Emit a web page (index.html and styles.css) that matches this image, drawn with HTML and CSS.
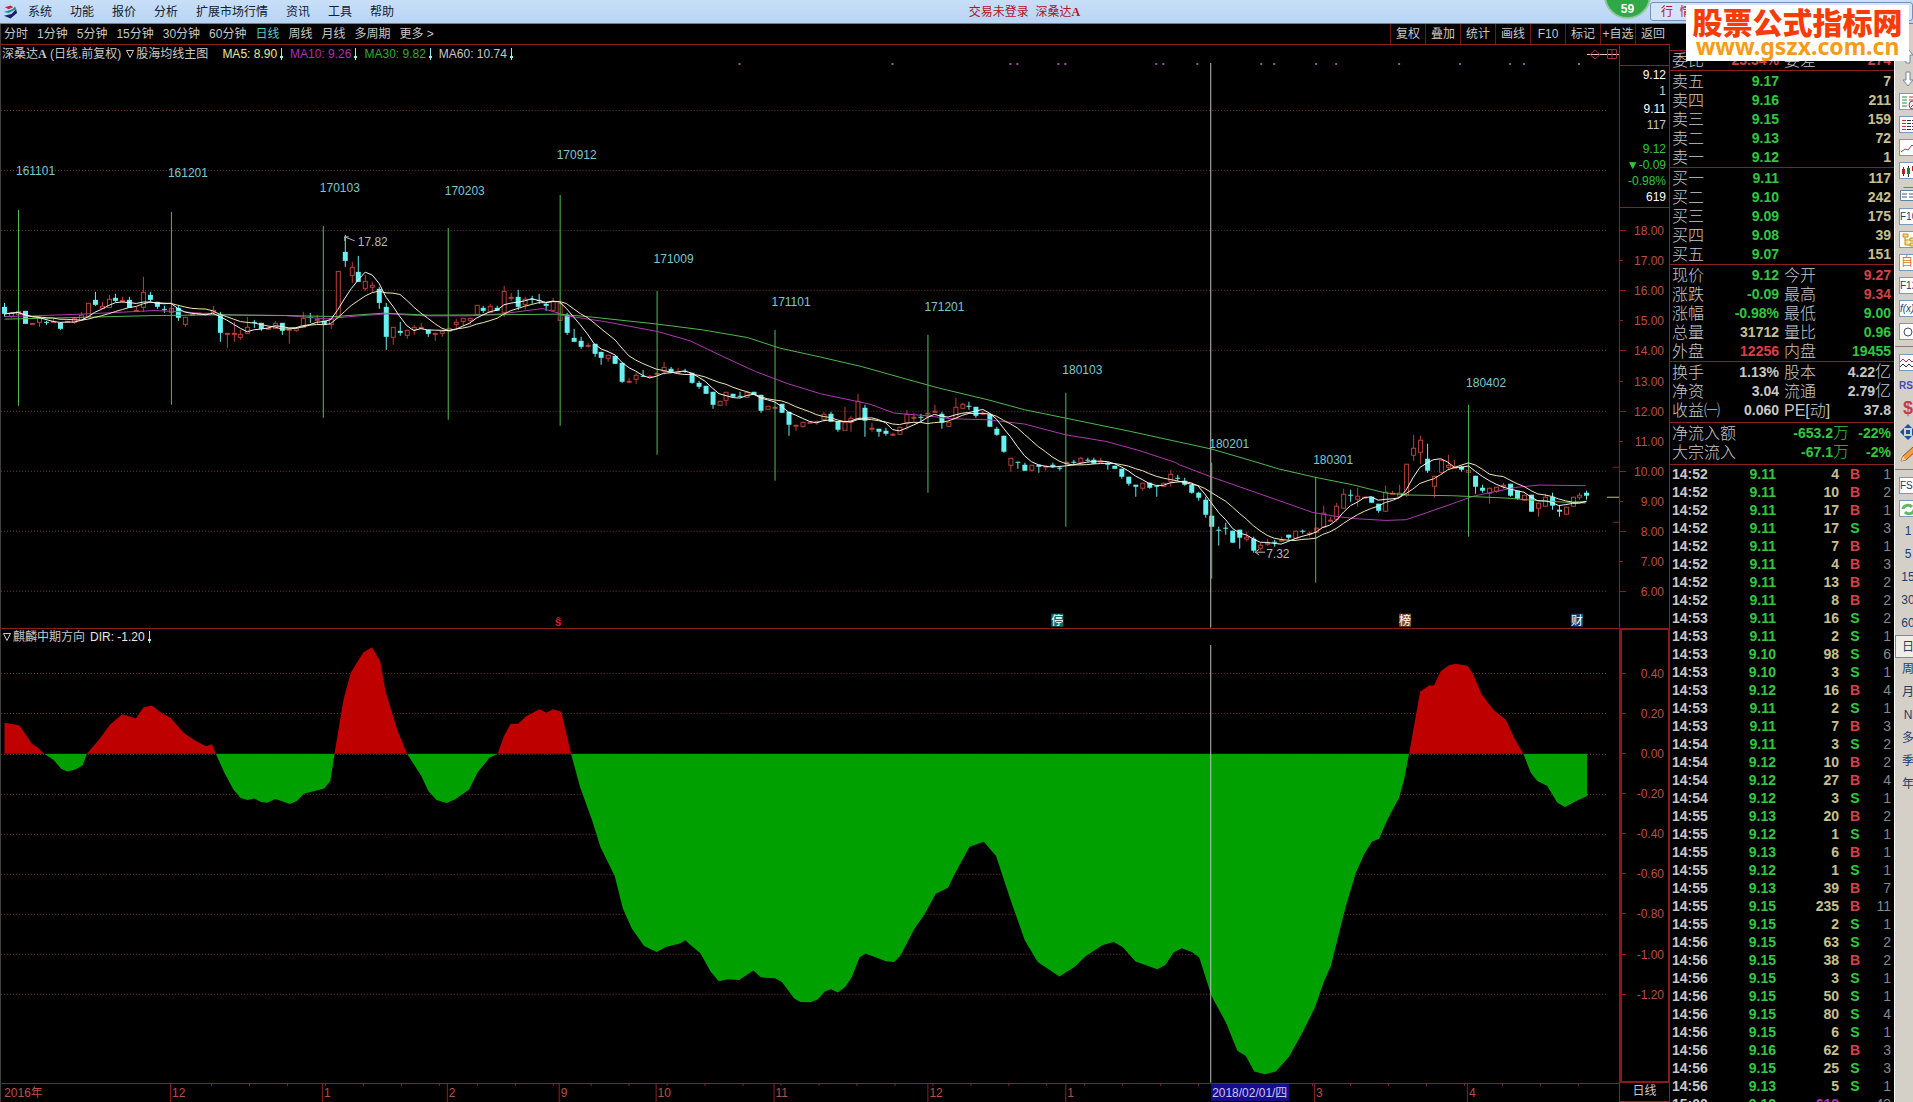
FILE: index.html
```html
<!DOCTYPE html>
<html lang="zh-CN">
<head>
<meta charset="utf-8">
<title>深桑达A 日线</title>
<link rel="stylesheet" href="styles.css">
</head>
<body>
<header class="menubar">
  <svg class="logo" viewBox="0 0 16 16" aria-hidden="true"><path d="M2 3 L8 1 L11 3 L6 5 Z" fill="#c8283c"/><path d="M1 8 L10 5 L13 2 L14 5 L6 9 Z" fill="#1c8c8c"/><path d="M1 12 L9 10 L14 5 L15 9 L8 15 Z" fill="#16206c"/></svg>
  <nav class="menu">
    <button>系统</button><button>功能</button><button>报价</button><button>分析</button><button>扩展市场行情</button><button>资讯</button><button>工具</button><button>帮助</button>
  </nav>
  <p class="app-title">交易未登录&nbsp; 深桑达<b>A</b></p>
  <button class="market-tab">行&nbsp; 情</button>
  <span class="score">59</span>
</header>

<main class="workspace">
  <div class="charts">
    <div class="periods">
      <nav class="period-list">
        <button>分时</button><button>1分钟</button><button>5分钟</button><button>15分钟</button><button>30分钟</button><button>60分钟</button><button class="active">日线</button><button>周线</button><button>月线</button><button>多周期</button><button>更多 &gt;</button>
      </nav>
      <div class="actions">
        <button>复权</button><button>叠加</button><button>统计</button><button>画线</button><button>F10</button><button>标记</button><button>+自选</button><button>返回</button>
      </div>
    </div>

    <section class="pane">
      <div class="legend">
        <span>深桑达<b>A</b> (日线.前复权)</span>
        <button class="fold" aria-label="折叠"><svg viewBox="0 0 8 8"><path d="M0.500 0.500H7.500L4 7.500Z" fill="none" stroke="#c8c8c8"/></svg></button>
        <span class="name">股海均线主图</span>
        <span class="ma ma5">MA5: 8.90</span>
        <span class="ma ma10">MA10: 9.26</span>
        <span class="ma ma30">MA30: 9.82</span>
        <span class="ma ma60">MA60: 10.74</span>
        <svg class="corner" viewBox="0 0 32 14" aria-hidden="true"><path d="M0 7.5H32" stroke="#e0c8c8"/><path d="M8 3l5 4.500l-5 4.500l-5-4.500ZM20.500 2.500h9v9h-9ZM25 2v10" fill="none" stroke="#a03030"/></svg>
      </div>
      <svg class="plot" id="price" viewBox="0 63 1619 565" role="img" aria-label="日K线"></svg>
    </section>
    <aside class="scale">
      <div class="quote">
        <span class="w">9.12</span><span>1</span><span class="w gap">9.11</span><span>117</span>
        <span class="g gap2">9.12</span><span class="g">▼-0.09</span><span class="g">-0.98%</span><span class="w">619</span>
      </div>
      <svg class="ticks" id="price-scale" viewBox="1620 208 49 420"></svg>
    </aside>

    <section class="pane lower">
      <div class="legend">
        <button class="fold" aria-label="折叠"><svg viewBox="0 0 8 8"><path d="M0.500 0.500H7.500L4 7.500Z" fill="none" stroke="#c8c8c8"/></svg></button>
        <span class="name">麒麟中期方向</span>
        <span class="ma dir">DIR: -1.20</span>
      </div>
      <svg class="plot" id="dir" viewBox="0 645 1619 438" role="img" aria-label="DIR"></svg>
    </section>
    <aside class="scale boxed"><svg class="ticks" id="dir-scale" viewBox="1622 631 46 450"></svg></aside>

    <svg class="plot timeline" id="time" viewBox="0 1083 1619 18"></svg>
    <div class="unit">日线</div>
  </div>

  <aside class="book">
    <table class="rows first"><tr><th>委比</th><td class="r">23.34%</td><th>委差</th><td class="r">274</td></tr></table>
    <table class="rows levels">
      <tr><th>卖五</th><td class="g">9.17</td><td class="y">7</td></tr>
      <tr><th>卖四</th><td class="g">9.16</td><td class="y">211</td></tr>
      <tr><th>卖三</th><td class="g">9.15</td><td class="y">159</td></tr>
      <tr><th>卖二</th><td class="g">9.13</td><td class="y">72</td></tr>
      <tr><th>卖一</th><td class="g">9.12</td><td class="y">1</td></tr>
    </table>
    <table class="rows levels">
      <tr><th>买一</th><td class="g">9.11</td><td class="y">117</td></tr>
      <tr><th>买二</th><td class="g">9.10</td><td class="y">242</td></tr>
      <tr><th>买三</th><td class="g">9.09</td><td class="y">175</td></tr>
      <tr><th>买四</th><td class="g">9.08</td><td class="y">39</td></tr>
      <tr><th>买五</th><td class="g">9.07</td><td class="y">151</td></tr>
    </table>
    <table class="rows">
      <tr><th>现价</th><td class="g">9.12</td><th>今开</th><td class="r">9.27</td></tr>
      <tr><th>涨跌</th><td class="g">-0.09</td><th>最高</th><td class="r">9.34</td></tr>
      <tr><th>涨幅</th><td class="g">-0.98%</td><th>最低</th><td class="g">9.00</td></tr>
      <tr><th>总量</th><td class="y">31712</td><th>量比</th><td class="g">0.96</td></tr>
      <tr><th>外盘</th><td class="r">12256</td><th>内盘</th><td class="g">19455</td></tr>
    </table>
    <table class="rows roomy">
      <tr><th>换手</th><td>1.13%</td><th>股本</th><td>4.22<i>亿</i></td></tr>
      <tr><th>净资</th><td>3.04</td><th>流通</th><td>2.79<i>亿</i></td></tr>
      <tr><th>收益㈠</th><td>0.060</td><th>PE[动]</th><td>37.8</td></tr>
    </table>
    <table class="rows flow roomy">
      <tr><th>净流入额</th><td class="g">-653.2<i>万</i></td><td class="g pct">-22%</td></tr>
      <tr><th>大宗流入</th><td class="g">-67.1<i>万</i></td><td class="g pct">-2%</td></tr>
    </table>
    <table class="trades"><tbody id="trades"></tbody></table>
  </aside>

  <nav class="strip" id="strip">
    <button aria-label="上"><svg viewBox="0 0 18 16"><path d="M9 1L14 7H11V15H7V7H4Z" fill="#fff" stroke="#7088a0"/></svg></button>
    <button aria-label="下"><svg viewBox="0 0 18 16"><path d="M9 15L14 9H11V1H7V9H4Z" fill="#fff" stroke="#7088a0"/></svg></button>
    <button class="tile" aria-label="报价"><svg viewBox="0 0 18 16"><path d="M2 3h5M2 6h5M2 9h5M2 12h5" stroke="#2a8a3a"/><path d="M9 3h6M9 6h6" stroke="#c03040"/><circle cx="13" cy="11" r="4" fill="#eee" stroke="#555"/><path d="M11 13l4-4" stroke="#a33"/></svg></button>
    <button class="tile" aria-label="列表"><svg viewBox="0 0 18 16"><path d="M2 3.500h16M2 6.500h16M2 9.500h16M2 12.500h16" stroke="#303048" stroke-dasharray="4 1"/><path d="M2 3.500h4M2 6.500h4M2 9.500h4M2 12.500h4" stroke="#c03040"/></svg></button>
    <button class="tile" aria-label="分时"><svg viewBox="0 0 18 16"><path d="M1 12L5 9L8 10L12 5L14 7L18 3" fill="none" stroke="#b03048"/></svg></button>
    <button class="tile" aria-label="K线"><svg viewBox="0 0 18 16"><path d="M3.500 4v9M8.500 3v11M13.500 1v9" stroke="#333"/><path d="M2 6h3v5H2ZM12 3h3v5h-3Z" fill="#b02020"/><path d="M7 5h3v6H7Z" fill="#208030"/></svg></button>
    <button aria-label="窗口"><svg viewBox="0 0 18 16"><path d="M4.500 1.500h14v10" fill="none" stroke="#6080a0"/><path d="M1.500 4.500h14v10h-14Z" fill="#fff" stroke="#6080a0"/><path d="M3 8h5M10 8h4M3 11h5M10 11h4" stroke="#405878"/></svg></button>
    <button class="tile small">F10</button>
    <button class="tile" aria-label="树"><svg viewBox="0 0 18 16"><path d="M3 2h5v3H3ZM10 6h5v3h-5ZM10 11h5v3h-5ZM5 5v8h5M5 8h5" fill="#f8e080" stroke="#c09020"/></svg></button>
    <button class="tile orange">自</button>
    <button class="tile small">F12</button>
    <button class="tile small ital">f(x)</button>
    <button class="tile" aria-label="圆"><svg viewBox="0 0 18 16"><circle cx="8" cy="8" r="4" fill="none" stroke="#405060"/></svg></button>
    <hr>
    <button class="tile" aria-label="波"><svg viewBox="0 0 18 16"><path d="M0 7l3-3 3 3 3-3 3 3 3-3 3 3" fill="none" stroke="#b03050"/><path d="M0 12l3-3 3 3 3-3 3 3 3-3 3 3" fill="none" stroke="#303040"/></svg></button>
    <button class="rsi">RSI</button>
    <button class="dollar">$</button>
    <button aria-label="移动"><svg viewBox="0 0 18 16"><path d="M9 0l4 4H5ZM9 16l4-4H5ZM1 8l4-4v8ZM17 8l-4-4v8Z" fill="#1850a8"/><rect x="7" y="6" width="4" height="4" fill="#1850a8"/></svg></button>
    <button aria-label="画笔"><svg viewBox="0 0 18 16"><path d="M2 14L4 9L14 0L18 3L7 13Z" fill="#f0a040" stroke="#905020"/><path d="M2 14l2-5 3 4Z" fill="#e8d0b0"/></svg></button>
    <hr>
    <button class="tile small">FS</button>
    <button class="tile" aria-label="刷新"><svg viewBox="0 0 18 16"><path d="M3 8a5 4 0 0 1 9-2M14 8a5 4 0 0 1-9 3" fill="none" stroke="#60b860" stroke-width="3"/></svg></button>
    <button>1</button><button>5</button><button>15</button><button>30</button><button>60</button><button class="on">日</button><button>周</button><button>月</button><button>N</button><button>多</button><button>季</button><button>年</button>
  </nav>
</main>

<div class="watermark"><strong>股票公式指标网</strong><span>www.gszx.com.cn</span></div>
<script src="chart.js"></script>
</body>
</html>
```
FILE: styles.css
```css
* { box-sizing: border-box; }
body {
  margin: 0;
  height: 100vh;
  overflow: hidden;
  display: flex;
  flex-direction: column;
  background: #000;
  color: #c8c8c8;
  font: 12px/16px "Liberation Sans", "Noto Sans CJK SC", sans-serif;
}
button {
  margin: 0;
  padding: 0;
  border: 0;
  background: none;
  color: inherit;
  font: inherit;
  white-space: nowrap;
}

/* Menu bar */
.menubar {
  position: relative;
  flex: none;
  display: flex;
  align-items: center;
  height: 24px;
  padding-left: 3px;
  background: linear-gradient(#c8dff8, #b8d4f4);
  border-bottom: 1px solid #708090;
  color: #142030;
}
.logo { width: 15px; height: 16px; }
.menu { display: flex; gap: 18px; margin-left: 10px; }
.app-title {
  position: absolute;
  left: 0;
  right: 0;
  margin: 0;
  padding-left: 136px;
  text-align: center;
  color: #b01428;
  pointer-events: none;
}
.app-title b, .legend b { font-family: "Liberation Serif", serif; }
.market-tab {
  position: absolute;
  right: 0;
  top: 2px;
  width: 263px;
  height: 19px;
  padding-left: 10px;
  border: 1px solid #7890b8;
  border-radius: 3px;
  background: #d4e4f8;
  color: #b01428;
  text-align: left;
}
.score {
  position: absolute;
  top: -28px;
  right: 262px;
  width: 47px;
  height: 47px;
  padding-top: 27px;
  border: 2px solid #8cc89c;
  border-radius: 50%;
  background: #30a848;
  color: #fff;
  font-weight: bold;
  text-align: center;
}

/* Workspace columns */
.workspace {
  flex: 1;
  min-height: 0;
  display: grid;
  grid-template-columns: 1fr 224px 19px;
}
.charts {
  display: grid;
  grid-template-columns: 1fr 51px;
  align-content: start;
  border-left: 1px solid #404040;
}
.periods {
  grid-column: 1 / -1;
  display: flex;
  justify-content: space-between;
  height: 21px;
  line-height: 20px;
  border-bottom: 1px solid #8c2020;
}
.period-list { display: flex; gap: 9px; padding-left: 3px; }
.period-list .active { color: #50c8c8; }
.actions { display: flex; }
.actions button { width: 35px; border-left: 1px solid #701818; }

/* Chart panes */
.pane { min-width: 0; }
.legend {
  display: flex;
  align-items: center;
  height: 18px;
  line-height: 18px;
  padding-left: 1px;
  white-space: nowrap;
}
.lower { border-top: 1px solid #8c2020; }
.lower .legend { height: 16px; padding-left: 0; }
.fold { display: flex; margin: 0 2px; }
.fold svg { width: 8px; height: 8px; }
.legend > span + .fold { margin-left: 5px; }
.name { margin-right: 5px; }
.pane:not(.lower) .name { margin-right: 14px; }
.ma { margin-right: 6px; }
.ma::after {
  content: "";
  display: inline-block;
  width: 5px;
  height: 12px;
  margin-left: 2px;
  vertical-align: -2px;
  background:
    linear-gradient(#90f0f0, #90f0f0) 2px 0 / 1px 12px no-repeat,
    linear-gradient(#90f0f0, #90f0f0) 1px 8px / 3px 2px no-repeat;
}
.ma5 { color: #e8e8a0; }
.ma10 { color: #b030b0; }
.ma30 { color: #38a838; }
.dir { color: #e8e8e8; }
.corner { width: 32px; height: 14px; margin-left: auto; }
.plot { display: block; width: 100%; }
.scale {
  display: flex;
  flex-direction: column;
  border-left: 1px solid #8c2020;
  border-right: 1px solid #8c2020;
}
.boxed { border: 2px solid #8c1818; border-left-width: 3px; }
.ticks { display: block; width: 100%; }
.quote {
  display: flex;
  flex-direction: column;
  height: 143px;
  margin-top: 20px;
  padding: 1px 3px 0 0;
  border-top: 1px solid #8c2020;
  border-bottom: 1px solid #8c2020;
  text-align: right;
}
.quote .gap { margin-top: 2px; }
.quote .gap2 { margin-top: 8px; }
.w { color: #fff; }
.g { color: #30c840; }
.r { color: #d84048; }
.y { color: #c8c090; }
.timeline { border-top: 1px solid #8c2020; border-bottom: 1px solid #8c2020; }
.unit {
  height: 19px;
  line-height: 17px;
  border: 1px solid #8c2020;
  border-top: 0;
  text-align: center;
}

/* Vector drawing */
svg text { font: 12px "Liberation Sans", "Noto Sans CJK SC", sans-serif; }
.grid { stroke: #783830; stroke-dasharray: 1 2; }
.axis-label { fill: #b85048; text-anchor: end; }
.tick { stroke: #8c2020; }
.up { fill: #000; stroke: #b84038; }
.up-wick { stroke: #b84038; }
.down { fill: #68f0f0; }
.down-wick { stroke: #68f0f0; }
.line { fill: none; stroke-width: 1; }
.l5 { stroke: #f4f4f4; }
.l10 { stroke: #f0e8b0; }
.l30 { stroke: #b038b0; }
.l60 { stroke: #50b850; }
.month { stroke: #50c050; }
.month-label { fill: #78c8d0; }
.cross { stroke: #c0c0c0; }
.note { fill: #b8b8b8; }
.flag { fill: #fff; text-anchor: middle; }
.split { fill: #d02020; font-weight: bold; }
.time-label { fill: #b85048; }
.cursor-label { fill: #c8c8ff; }

/* Quote panel */
.book {
  min-height: 0;
  overflow: hidden;
  padding-top: 26px;
  background: #000;
}
.book table {
  width: 100%;
  border-collapse: collapse;
  table-layout: fixed;
  font-size: 14px;
  font-weight: bold;
}
.rows {
  display: block;
  padding: 1px 3px 0 2px;
  border-top: 1px solid #8c2020;
}
.rows.roomy { padding-bottom: 2px; }
.rows tbody { display: grid; }
.rows tr { display: grid; grid-template-columns: 50px 57px 51px 1fr; height: 19px; line-height: 19px; }
.rows.levels tr { grid-template-columns: 50px 57px 1fr; }
.rows.flow tr { grid-template-columns: 67px 1fr 42px; }
.rows.first { padding: 0 3px 0 2px; }
.rows th { padding: 0; font-size: 16px; font-weight: 300; text-align: left; white-space: nowrap; }
.rows td { padding: 0; text-align: right; white-space: nowrap; }
.rows td + th { padding-left: 5px; }
.rows i { font-size: 16px; font-style: normal; font-weight: 300; line-height: 1px; }
.trades { border-top: 1px solid #8c2020; }
.trades tr { height: 18px; line-height: 18px; }
.trades td { padding: 0; text-align: right; }
.trades td:nth-child(1) { width: 40px; padding-left: 2px; text-align: left; }
.trades td:nth-child(2) { width: 66px; color: #30c840; }
.trades td:nth-child(3) { width: 63px; color: #c8c090; }
.trades td:nth-child(4) { width: 32px; text-align: center; }
.trades td:nth-child(5) { padding-right: 3px; color: #888; font-weight: normal; }
.trades .big { color: #b030b0; }

/* Tool strip */
.strip {
  display: flex;
  flex-direction: column;
  overflow: hidden;
  padding-top: 20px;
  background: #d4d0c8;
  border-left: 1px solid #fff;
  color: #203c70;
}
.strip button {
  flex: none;
  width: 22px;
  height: 23px;
  padding: 3px 0 3px 4px;
  text-align: center;
  line-height: 17px;
}
.strip svg { display: block; width: 18px; height: 16px; }
.strip .tile {
  height: 17px;
  width: 22px;
  margin: 3px 0 3px 4px;
  padding: 0;
  border: 1px solid #7898c0;
  background: #fff;
  line-height: 15px;
  text-align: left;
}
.strip .small { font-size: 10px; }
.strip .orange { color: #d87830; padding-left: 1px; }
.strip .ital { font-style: italic; }
.strip .rsi { color: #4848c0; font-size: 10px; font-weight: bold; text-align: left; }
.strip .dollar { color: #c04048; font-size: 18px; font-weight: bold; }
.strip .on { border: 1px solid #888; background: #f0eee8; }
.strip hr { flex: none; width: 100%; height: 1px; margin: 3px 0 4px; border: 0; background: #808080; }

.watermark {
  position: absolute;
  top: 5px;
  right: 4px;
  width: 223px;
  height: 56px;
  display: flex;
  flex-direction: column;
  align-items: center;
  background: #fff;
  white-space: nowrap;
}
.watermark strong {
  color: #f83c08;
  font: 900 30px/32px "Noto Sans CJK SC", sans-serif;
}
.watermark span {
  color: #f89c18;
  font: bold 23px/18px "Noto Sans", sans-serif;
}
```
FILE: chart.js
```js
const NS = 'http://www.w3.org/2000/svg';
function add(parent, tag, attrs, text) {
  const el = document.createElementNS(NS, tag);
  for (const k in attrs) el.setAttribute(k, attrs[k]);
  if (text !== undefined) el.textContent = text;
  parent.appendChild(el);
  return el;
}
const byId = id => document.getElementById(id);
const crisp = v => Math.round(v) + 0.5;

/* Bars: direction, high, body top, body bottom, low; three units to a pixel. */
const segments = [
  [200, `d308,321,342,350 u335,338,352,355 u333,333,345,345 d333,333,371,373 u368,368,370,370 u350,355,370,380 d362,366,368,374 u355,362,368,368 d370,370,386,391 u362,362,368,368 u355,355,368,372 u337,345,362,362 u310,310,350,350 d276,300,315,318 u305,318,326,326 u285,297,325,325 d283,294,302,307 u292,300,302,310 d290,300,325,325 u322,330,337,337 u230,276,323,335 d277,285,300,306 d307,307,322,326 d318,326,330,340 u325,325,340,340 d318,323,353,362 u352,352,374,380 u343,343,349,349 u338,338,342,342 u338,338,342,342 u318,330,338,338 d335,342,398,427 u398,398,402,445 u365,400,406,425 u390,402,413,420 u350,380,402,402 d360,366,368,385 d370,370,388,393 u385,385,388,388 u362,368,386,386 d370,370,392,405 u388,388,390,433 u385,385,392,397 u335,355,385,385 d340,350,352,368 u345,358,362,372 d363,363,375,375 u358,358,375,387 u213,213,355,355 d105,156,182,200 u186,202,227,248 d168,216,245,245 u225,243,266,272 u247,255,265,278 d262,268,308,326 d310,321,410,450 u382,382,415,435 d366,394,398,408 u390,390,408,418 u375,382,390,405 u370,380,384,384 d390,390,402,410 u400,400,404,423 u393,393,403,410 u385,385,395,395 u358,365,376,385 u355,355,367,378 u355,355,363,375 u316,316,345,345 d318,324,333,340 u312,318,340,340 d318,325,333,333 u258,274,338,350 u278,290,294,302 d270,291,320,330 u292,298,315,330 d288,298,300,312 d282,300,302,312 d310,312,318,333 u295,302,332,332 u310,310,362,362`],
  [260, `d160,166,218,224 d206,234,246,246 d232,243,261,267 u248,254,260,264 d252,252,282,291 d276,276,294,315 u286,286,298,305 d288,288,311,311 d308,308,366,370 u355,362,368,368 u340,346,360,372 d330,348,350,352 u345,348,354,354 u338,338,342,342 u306,321,336,345 d320,326,338,338 u325,335,338,338 d326,332,336,340 d340,340,368,373 d362,369,381,387 d378,378,402,402 d396,396,434,446 u424,424,437,437 u397,397,422,437 d402,402,410,410 d395,408,410,414 u395,395,413,413 d396,396,406,406 d405,405,453,458 u438,438,450,450 u440,440,445,445 d433,433,460,460 d457,457,495,528 u496,496,499,512 u486,486,500,504 u486,486,488,488 u484,484,488,495 u456,462,480,485 d456,462,485,485 d485,485,510,515 u440,487,514,514 u468,475,488,515 u402,422,480,480 d435,444,482,530 u490,505,508,517 d508,508,515,530 d505,514,522,527 u518,523,526,528 u502,502,524,524 u450,463,492,510 u458,470,474,485 d462,472,474,485 u458,458,470,470 u436,454,460,460 d455,462,489,507 u485,485,502,502 u414,442,478,478 u429,433,446,446 d426,438,441,450 d441,441,468,474 u452,460,463,465 d463,463,500,500 d500,507,524,528 d528,528,576,580 u595,595,618,635 d606,606,609,628 d608,614,633,633 u616,616,632,637 d616,616,622,640 u618,618,624,633 d608,614,620,625 d618,624,626,632 u605,606,608,612 d600,606,608,614 u590,595,608,608 d594,600,602,606 d594,600,613,613 u593,603,610,610 d606,610,616,630 d618,618,626,626 d627,627,651,658 d651,651,672,678 d676,676,680,710 u670,670,688,692 d670,670,684,688 d678,678,680,710 u670,670,682,682 u630,643,665,680 d645,655,658,664 d655,663,675,678 d675,675,700,702 d695,700,715,722`],
  [360, `d412,420,465,475 d468,468,500,500 d500,510,512,558 d490,504,506,525 d512,512,548,548 d511,511,533,567 u515,530,540,545 d530,538,572,580 u548,556,566,572 u538,550,552,558 d541,545,548,560 u532,540,546,546 d525,525,533,540 u514,514,538,538 d509,514,516,522 u515,520,522,530 u505,505,520,520 u437,460,505,505 u470,481,487,487 u428,438,480,487 u387,402,448,448 d390,405,408,425 u385,407,420,440 u410,412,414,416 d412,412,428,428 d432,432,452,460 u378,395,457,457 u393,400,405,405 u375,398,410,410 u313,313,408,412 u225,265,287,303 u228,240,280,313 d252,297,333,340 u347,347,380,413 u300,300,340,340 u285,315,325,330 u300,320,322,325 d318,322,329,335 u325,330,338,338 d347,347,380,403 d375,384,392,400 u383,383,402,433 u382,382,395,398 u370,374,382,386 d373,373,408,410 d394,394,418,420 u405,405,422,422 d405,405,455,455 u430,430,448,472 u403,410,440,440 d400,412,437,450 d438,450,457,472 u440,440,464,464 u412,412,442,442 u400,405,415,420 d393,400,408,420`]
];
const bars = segments.flatMap(([base, s]) => s.trim().split(/\s+/).map(t => {
  const [hi, top, bot, lo] = t.slice(1).split(',').map(v => base + v / 3);
  return { up: t[0] === 'u', hi, top, bot, lo };
}));
const barX = i => 4.4 + 6.943 * i - 1;

const price = byId('price');
const priceY = p => 230 + (18 - p) * 30.1;
for (let p = 22; p >= 6; p -= 2) add(price, 'path', { class: 'grid', d: `M0 ${crisp(priceY(p))}H1606` });

bars.forEach((b, i) => {
  const x = Math.round(barX(i));
  add(price, 'path', { class: b.up ? 'up-wick' : 'down-wick', d: `M${x + .5} ${Math.round(b.hi)}V${Math.round(b.lo)}` });
  const t = Math.round(b.top), h = Math.max(1, Math.round(b.bot) - t);
  if (b.up) add(price, 'rect', { class: 'up', x: x - 1.5, y: t + .5, width: 4, height: Math.max(1, h - 1) });
  else add(price, 'rect', { class: 'down', x: x - 2, y: t, width: 5, height: h });
});

const months = [
  ['161101', 16, 171, 18, 210, 406], ['161201', 168, 173, 171, 212, 405], ['170103', 320, 188, 323, 226, 418],
  ['170203', 445, 191, 448, 228, 420], ['170912', 557, 155, 560, 195, 426], ['171009', 654, 259, 657, 291, 455],
  ['171101', 772, 302, 775, 330, 481], ['171201', 925, 307, 928, 335, 493], ['180103', 1063, 370, 1066, 393, 527],
  ['180201', 1210, 444, 1212, 463, 579], ['180301', 1314, 460, 1316, 477, 583], ['180402', 1467, 383, 1469, 405, 537]
];
for (const [label, lx, ly, x, y1, y2] of months) {
  add(price, 'path', { class: 'month', d: `M${x - .5} ${y1}V${y2}` });
  add(price, 'text', { class: 'month-label', x: lx - 1, y: ly + 4 }, label);
}

function average(n) {
  return bars.map((_, i) => {
    const part = bars.slice(Math.max(0, i - n + 1), i + 1);
    return [barX(i), part.reduce((s, b) => s + (b.up ? b.top : b.bot), 0) / part.length];
  });
}
const poly = pts => 'M' + pts.map(p => p[0].toFixed(1) + ' ' + p[1].toFixed(1)).join('L');
const A = s => s.split(' ').map(p => { const [x, y] = p.split(',').map(Number); return [x / 2.45 - 1, 200 + y / 3]; });
const B = (s, y0) => s.split(' ').map(p => { const [x, y] = p.split(',').map(Number); return [559 + x / 2.45, y0 + y / 3]; });
const C = (s, y0) => s.split(' ').map(p => { const [x, y] = p.split(',').map(Number); return [1179 + x / 3, y0 + y / 3]; });
const ma30 = [
  ...A('11,350 80,348 200,343 300,337 380,332 450,336 540,345 700,347 800,357 880,348 950,342 1040,348 1150,348 1230,342 1330,326 1370,340'),
  ...B('0,165 110,185 240,215 320,243 400,290 480,335 560,372 640,402 760,433 820,460 900,468 960,477 1050,480 1140,493 1240,525 1340,545 1420,572 1510,608', 260),
  ...C('0,315 97,352 200,388 320,430 400,458 470,470 530,477 620,482 680,480 740,460 820,432 880,410 950,395 1010,383 1080,376 1220,378', 360)
];
const ma60 = [
  ...A('11,358 150,354 380,347 540,345 700,347 820,350 940,340 1050,346 1200,345 1370,343'),
  ...B('0,163 80,172 240,193 350,210 460,233 540,265 640,292 740,320 850,358 930,385 1050,420 1140,450 1240,475 1400,515', 260),
  ...C('0,247 97,268 200,298 300,328 410,353 520,375 620,400 690,406 820,408 980,415 1080,423 1150,427 1220,430', 360)
];
add(price, 'path', { class: 'line l30', d: poly(ma30) });
add(price, 'path', { class: 'line l60', d: poly(ma60) });
add(price, 'path', { class: 'line l10', d: poly(average(10)) });
add(price, 'path', { class: 'line l5', d: poly(average(5)) });

for (const x of [740, 893, 1011, 1018, 1059, 1066, 1157, 1164, 1198, 1262, 1275, 1317, 1337, 1400, 1461, 1511, 1525, 1580])
  add(price, 'rect', { x: x - 2, y: 63, width: 2, height: 2, fill: '#985098' });
add(price, 'path', { class: 'cross', d: 'M1210.5 63V628' });
add(price, 'path', { class: 'note', d: 'M344 237l10 4M344 237v4M344 237h4', stroke: '#b8b8b8' });
add(price, 'text', { class: 'note', x: 357, y: 246 }, '17.82');
add(price, 'path', { d: 'M1255 552.5h10M1255 552.5l4 -3M1255 552.5l4 3', stroke: '#b8b8b8' });
add(price, 'text', { class: 'note', x: 1266, y: 558 }, '7.32');
for (const [t, x, c] of [['停', 1057, '#107070'], ['榜', 1405, '#805020'], ['财', 1577, '#104070']]) {
  add(price, 'rect', { x: x - 6, y: 614, width: 12, height: 13, fill: c });
  add(price, 'text', { class: 'flag', x, y: 625 }, t);
}
add(price, 'text', { class: 'split', x: 554, y: 626 }, 'ŝ');
add(price, 'path', { d: 'M1607 497.500h12', stroke: '#c0c090' });
add(price, 'path', { class: 'tick', d: 'M1613 467.500h6M1613 522.500h6' });

const ps = byId('price-scale');
for (let p = 18; p >= 6; p--) {
  add(ps, 'path', { class: 'tick', d: `M1620 ${crisp(priceY(p))}h${p % 2 ? 3 : 6}` });
  add(ps, 'text', { class: 'axis-label', x: 1664, y: Math.round(priceY(p)) + 5 }, p.toFixed(2));
}

/* Direction indicator: one outline, red above zero and green below. */
const dir = byId('dir'), zero = 753;
const dirY = v => 754 - v * 200.6;
for (let v = 4; v >= -12; v -= 2) add(dir, 'path', { class: 'grid', d: `M0 ${Math.floor(dirY(v / 10)) + .5}H1606` });
const down = s => s.split(' ').map(p => { const [x, y] = p.split(',').map(Number); return [x / 2.45 - 1, 610 + y / 3]; });
const outline = [
  ...down('11,433 11,340 48,348 78,403 93,415 108,433 130,450 150,478 165,486 185,480 203,467 213,433 243,390 270,345 300,314 333,327 352,293 372,288 398,312 418,325 450,370 478,393 505,410 520,404 529,433 550,490 572,540 590,566 607,572 623,567 640,578 655,580 675,569 690,575 710,584 728,575 745,553 795,537 810,515 820,433 842,270 860,190 890,130 912,113 932,155 945,245 975,365 998,433 1033,500 1050,545 1070,572 1095,581 1115,570 1150,540 1170,490 1200,445 1220,433 1235,380 1252,343 1270,343 1290,320 1322,299 1340,310 1355,299 1376,307 1400,433'),
  ...B('50,143 80,245 100,323 135,410 155,508 177,568 207,620 238,638 260,623 295,613 308,603 325,622 345,642 370,697 390,726 412,720 440,722 475,694 493,714 528,717 545,728 575,778 590,788 615,789 633,780 650,757 665,750 682,760 700,743 716,715 735,655 750,643 800,666 820,668 835,650 870,568 892,530 922,463 952,445 970,400 1005,322 1040,307 1070,350 1105,480 1140,602 1172,668 1225,712 1262,683 1290,650 1330,618 1358,608 1380,623 1412,667 1465,690 1485,677 1505,640 1525,627 1550,638', 740),
  ...C('60,1045 97,1160 140,1240 175,1325 200,1340 225,1387 257,1395 290,1387 330,1342 370,1270 407,1195 435,1115 455,1070 475,990 500,890 530,790 555,735 578,697 600,688 625,630 660,565 675,510 690,433 723,247 750,228 765,227 785,185 810,167 830,163 865,169 880,190 908,255 945,303 980,330 1005,385 1033,433 1055,490 1075,515 1105,530 1135,580 1158,593 1195,573 1224,560 1224,433', 610)
].map(([x, y]) => [x, y - 0.5]);
const defs = add(dir, 'defs', {});
add(add(defs, 'clipPath', { id: 'above' }), 'rect', { x: 0, y: 640, width: 1619, height: zero + 1 - 640 });
add(add(defs, 'clipPath', { id: 'below' }), 'rect', { x: 0, y: zero + 1, width: 1619, height: 340 });
add(dir, 'path', { d: poly(outline) + 'Z', fill: '#be0000', 'clip-path': 'url(#above)' });
add(dir, 'path', { d: poly(outline) + 'Z', fill: '#00a000', 'clip-path': 'url(#below)' });
add(dir, 'path', { class: 'cross', d: 'M1210.5 645V1083' });

const ds = byId('dir-scale');
for (let v = 4; v >= -12; v -= 2) {
  const y = crisp(dirY(v / 10));
  add(ds, 'path', { class: 'tick', d: `M1622 ${y}h4` });
  add(ds, 'text', { class: 'axis-label', x: 1664, y: y + 4 }, (v / 10).toFixed(2));
}

const time = byId('time');
for (const [t, x] of [['12', 171], ['1', 323], ['2', 448], ['9', 560], ['10', 657], ['11', 775], ['12', 929], ['1', 1067], ['3', 1316], ['4', 1469]]) {
  add(time, 'path', { class: 'tick', d: `M${x - 1.5} 1083v18` });
  add(time, 'text', { class: 'time-label', x, y: 1096 }, t);
}
add(time, 'text', { class: 'time-label', x: 3, y: 1096 }, '2016年');
for (let x = 210; x < 1600; x += 38) add(time, 'path', { class: 'tick', d: `M${x}.5 1083v2` });
add(time, 'rect', { x: 1211, y: 1083, width: 78, height: 17, fill: '#180c88' });
add(time, 'text', { class: 'cursor-label', x: 1212, y: 1096 }, '2018/02/01/四');

const trades = `14:52 9.11 4 B 1|14:52 9.11 10 B 2|14:52 9.11 17 B 1|14:52 9.11 17 S 3|14:52 9.11 7 B 1|14:52 9.11 4 B 3|14:52 9.11 13 B 2|14:52 9.11 8 B 2|14:53 9.11 16 S 2|14:53 9.11 2 S 1|14:53 9.10 98 S 6|14:53 9.10 3 S 1|14:53 9.12 16 B 4|14:53 9.11 2 S 1|14:53 9.11 7 B 3|14:54 9.11 3 S 2|14:54 9.12 10 B 2|14:54 9.12 27 B 4|14:54 9.12 3 S 1|14:55 9.13 20 B 2|14:55 9.12 1 S 1|14:55 9.13 6 B 1|14:55 9.12 1 S 1|14:55 9.13 39 B 7|14:55 9.15 235 B 11|14:55 9.15 2 S 1|14:56 9.15 63 S 2|14:56 9.15 38 B 2|14:56 9.15 3 S 1|14:56 9.15 50 S 1|14:56 9.15 80 S 4|14:56 9.15 6 S 1|14:56 9.16 62 B 3|14:56 9.15 25 S 3|14:56 9.13 5 S 1|15:00 9.12 618 - 49`;
byId('trades').innerHTML = trades.split('|').map(r => {
  const [t, p, v, s, n] = r.split(' ');
  const side = s === 'B' ? 'r' : 'g';
  return `<tr><td>${t}</td><td>${p}</td><td>${+v > 500 ? `<span class="big">${v}</span>` : v}</td><td class="${side}">${s === '-' ? '' : s}</td><td>${n}</td></tr>`;
}).join('');
```
